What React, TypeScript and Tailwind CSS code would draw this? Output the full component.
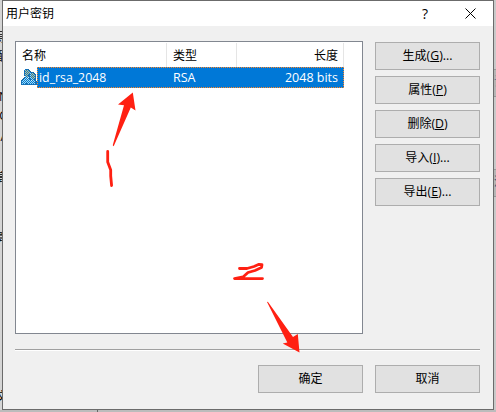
import React from "react";

const actions = [
  { label: "生成", key: "G", more: true },
  { label: "属性", key: "P", more: false },
  { label: "删除", key: "D", more: false },
  { label: "导入", key: "I", more: true },
  { label: "导出", key: "E", more: true },
];

const behindLeft = [
  { text: "导", top: 31 },
  { text: "配", top: 50 },
  { text: "F", top: 70 },
  { text: "N", top: 90 },
  { text: "G", top: 109 },
  { text: "A", top: 130 },
  { text: "高", top: 171 },
  { text: "算", top: 231 },
  { text: "文", top: 390 },
];

// y: skin and hair highlights, d: outline, t: clothing, g: pale shading
const userPixels = [
  "....dddd........",
  "...dyyyyd.......",
  "...dyyyyyd......",
  "...tyyyyydddd...",
  "...dyyyydttyyd..",
  "...tyyytdtyyyyd.",
  "...dtyyddtyyyyd.",
  "....tyytdtyyyyd.",
  "...dgttgdttyyyd.",
  "..dttggtddttydd.",
  ".dtttttttdttgdd.",
  "dttttttdttggttd.",
  "dtttttdttttttttd",
  "dttttdttttttttdd",
  "dttttdttttttttdd",
  "dddddddddddddddd",
];

const pixelColors: Record<string, string> = {
  y: "#d2c27a",
  d: "#2a6a96",
  t: "#a5dcee",
  g: "#eef0e0",
};

function Button({ children }: { children: React.ReactNode }) {
  return (
    <button className="flex h-7 w-[105px] items-center justify-center border border-[#adadad] bg-[#e1e1e1] text-xs leading-none text-black">
      <span>{children}</span>
    </button>
  );
}

function UsersIcon() {
  return (
    <svg className="block" width="16" height="16" viewBox="0 0 16 16" shapeRendering="crispEdges">
      {userPixels.map((row, y) =>
        row.split("").map((c, x) =>
          c === "." ? null : (
            <rect
              key={`${x}-${y}`}
              x={x}
              y={y}
              width="1"
              height="1"
              fill={(x + y) % 2 ? pixelColors[c] : "#0078d7"}
            />
          ),
        ),
      )}
    </svg>
  );
}

function KeyTable() {
  return (
    <div className="h-[293px] w-[348px] border border-[#828790] bg-white pt-px text-xs leading-none text-black">
      <div className="flex h-6 w-[328px]">
        <div className="flex w-[151px] items-center border-r border-[#e5e5e5] pl-1.5 pt-px">名称</div>
        <div className="flex w-[70px] items-center border-r border-[#e5e5e5] pl-1.5 pt-px">类型</div>
        <div className="flex w-[107px] items-center justify-end border-r border-[#e5e5e5] pr-[5px] pt-px">长度</div>
      </div>
      <div className="flex h-[21px] w-[328px] pl-[5px]">
        <div className="w-4 shrink-0 pt-0.5">
          <UsersIcon />
        </div>
        <div className="flex h-[21px] w-[307px] items-center border border-dotted border-[#ff8728] bg-[#0078d7] pt-px text-white">
          <span className="w-[135px] pl-px text-[12.3px]">id_rsa_2048</span>
          <span className="text-[12.5px]">RSA</span>
          <span className="ml-auto pr-[5px] text-[12.5px]">2048 bits</span>
        </div>
      </div>
    </div>
  );
}

export default function App() {
  return (
    <div className="relative h-[412px] w-[496px] overflow-hidden bg-[#c9c9c9] font-['Open_Sans','Noto_Sans_CJK_SC',sans-serif]">
      <div className="absolute inset-y-0 left-0 w-0.5 overflow-hidden bg-[#d5d5d5] text-xs leading-[14px] text-black">
        {behindLeft.map((item) => (
          <span key={item.top} className="absolute right-[-6px]" style={{ top: item.top }}>
            {item.text}
          </span>
        ))}
      </div>
      <div className="absolute inset-x-0 bottom-0 h-0.5 bg-[#bcbcbc]">
        <div className="ml-[97px] h-full w-px bg-[#666]" />
      </div>
      <div className="absolute right-0 top-[69px] h-7 w-0.5 overflow-hidden border-y border-[#999] bg-[#b6b6b6]">
        <span className="absolute left-0 top-1 text-xs text-[#5b6990]">试</span>
      </div>
      <div className="absolute right-0 top-[169px] h-7 w-0.5 overflow-hidden border-y border-[#999] bg-[#b6b6b6]">
        <span className="absolute left-0 top-1 text-xs text-[#334b78]">流</span>
      </div>

      <section className="relative ml-0.5 h-[410px] w-[492px] border border-[#6b6b6b] bg-[#f0f0f0]">
        <header className="flex h-[25px] items-center bg-white pl-[3px] text-xs leading-none text-black">
          <h1>用户密钥</h1>
          <span className="ml-auto mr-[37px] text-[14px]">?</span>
          <svg className="mr-[17px]" width="11" height="11" viewBox="0 0 11 11" fill="none" stroke="#000" strokeWidth="1">
            <path d="M.5.5l10 10M10.5.5l-10 10" />
          </svg>
        </header>
        <div className="flex px-3 pt-[15px]">
          <KeyTable />
          <div className="ml-3 flex flex-col gap-1.5 pt-px">
            {actions.map((a) => (
              <Button key={a.key}>
                {a.label}
                <span className="text-[12.3px]">
                  (<u className="underline-offset-1">{a.key}</u>){a.more && "..."}
                </span>
              </Button>
            ))}
          </div>
        </div>
        <div className="ml-3 mt-[15px] h-0.5 w-[465px] border-b border-t border-b-white border-t-[#a0a0a0]" />
        <footer className="flex justify-end gap-3 pr-[13px] pt-3.5">
          <Button>确定</Button>
          <Button>取消</Button>
        </footer>
      </section>

      <svg className="pointer-events-none absolute left-0 top-0" width="496" height="412" fill="none">
        <g fill="#ff2012">
          <path d="M132.8 92.5L135.5 110.5 130.8 107.5 114 145.5Q113 147 112.8 145L124 105.2 118 104.4z" />
          <path d="M267 302Q267.6 301.4 268.2 302.2L293 337 297.8 334 299.5 352.6 282.7 343.6 287.3 342.5z" />
        </g>
        <g stroke="#ff2012" strokeWidth="2.8" strokeLinecap="round" strokeLinejoin="round">
          <path d="M107.7 151.5V162L110.7 170V176L111.6 185.5" />
          <path d="M239.5 268.5H247L254 266.5 259 264.3 262 264.7 261.5 267.5 255 270.5 248 272.5 243 277 234.5 278.6H262.5" />
        </g>
      </svg>
    </div>
  );
}
